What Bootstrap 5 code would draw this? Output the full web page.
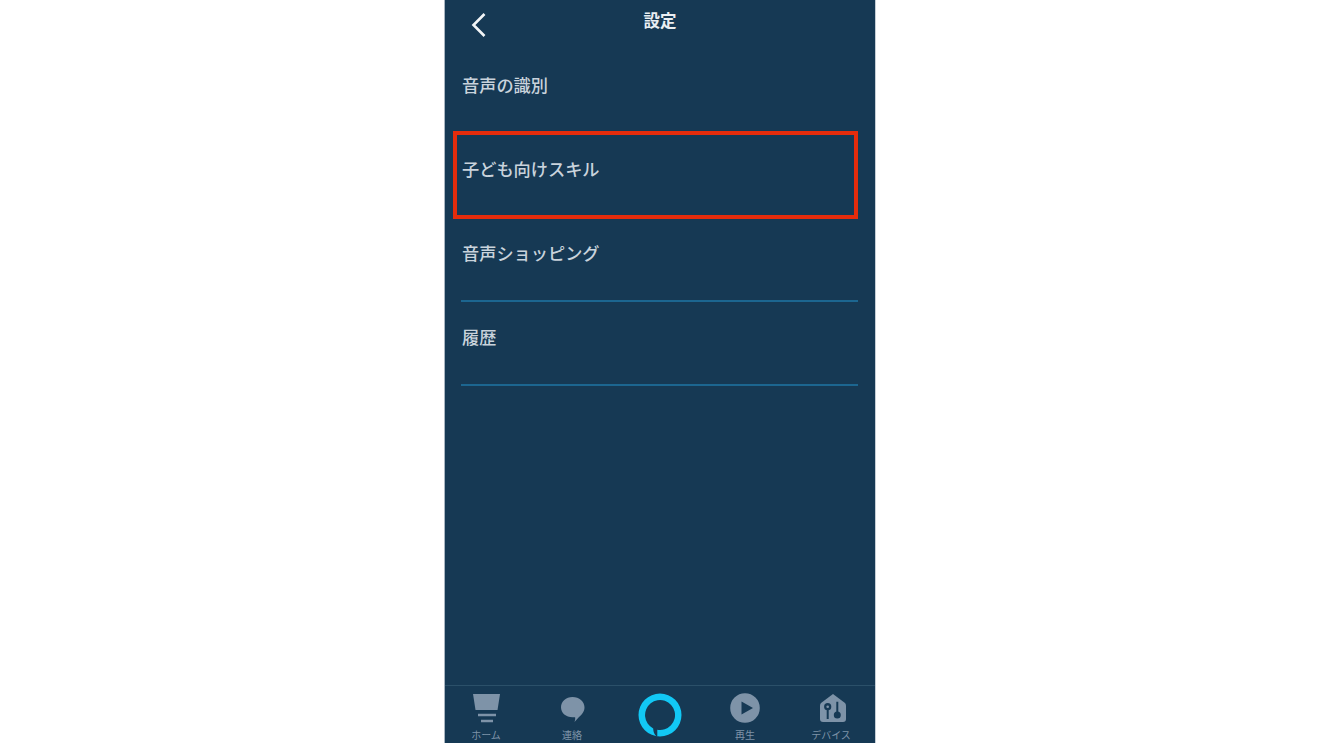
<!DOCTYPE html>
<html lang="ja">
<head>
<meta charset="utf-8">
<title>設定</title>
<link href="https://cdn.jsdelivr.net/npm/bootstrap@5.3.0/dist/css/bootstrap.min.css" rel="stylesheet">
<style>
html,body{height:100%;background:#fff;overflow:hidden}
body{font-family:"Noto Sans CJK JP","Liberation Sans",sans-serif}
.phone-screen{width:430px;height:743px;margin-left:445px;background:#163954;color:#c9d3dc;box-shadow:-1px 0 0 #a9b6c2,1px 0 0 #c5ced6}
.top-head{height:50px}
.back-btn{left:25px;top:12px;width:18px;height:26px}
.head-title{font-size:16.5px;font-weight:700;color:#e9eef2;line-height:20px;padding-top:10px}
.menu-row{height:84px;padding:25px 0 0 17px;font-size:17.2px;font-weight:500;line-height:20px}
.row-lined{border-bottom:2px solid #1c6690;margin-left:16px;padding-left:1px;margin-right:17px}
.red-frame{left:8px;top:-3px;width:405px;height:88px;border:4px solid #e52c0c;pointer-events:none}
.tab-bar{height:58px;border-top:1px solid #2b5069;display:grid;grid-template-columns:82px 90px 86px 84px 88px}
.tab-cell{height:57px}
.tab-art{height:40px}
.tab-name{font-size:10px;line-height:12px;margin-top:3px;color:#7e93a8;white-space:nowrap}
</style>
</head>
<body>
<main class="phone-screen d-flex flex-column">
  <header class="top-head position-relative text-center">
    <svg class="back-btn position-absolute" viewBox="0 0 18 26" aria-hidden="true"><path d="M14.500 2 3.500 13l11 11" fill="none" stroke="#f2f5f7" stroke-width="2.600"/></svg>
    <div class="head-title">設定</div>
  </header>
  <section class="flex-grow-1">
    <div class="menu-row">音声の識別</div>
    <div class="menu-row position-relative">子ども向けスキル<div class="red-frame position-absolute"></div></div>
    <div class="row-lined menu-row">音声ショッピング</div>
    <div class="row-lined menu-row">履歴</div>
  </section>
  <nav class="tab-bar">
    <div class="tab-cell d-flex flex-column align-items-center">
      <svg class="tab-art" width="30" height="40" viewBox="0 0 30 40" aria-hidden="true"><path d="M2 8h27l-2.500 16h-22z" fill="#7e93a8"/><path d="M7 27.700h18v2.600H7zM10 33.700h12v2.600H10z" fill="#7e93a8"/></svg>
      <div class="tab-name">ホーム</div>
    </div>
    <div class="tab-cell d-flex flex-column align-items-center">
      <svg class="tab-art" width="30" height="40" viewBox="0 0 30 40" aria-hidden="true"><path d="M15.500 11c6.800 0 12 4.300 12 10.300 0 4.700-3 7.700-5.500 9.700-1.500 1.500-3 3.500-4.500 5 .6-1.700.9-3.300.6-4.700-.4 0-1 0-2.600 0C9 31.300 4 27 4 21.300 4 15.300 9 11 15.500 11z" fill="#7e93a8"/></svg>
      <div class="tab-name">連絡</div>
    </div>
    <div class="tab-cell d-flex flex-column align-items-center">
      <svg width="46" height="52" viewBox="0 0 46 52" aria-hidden="true"><path fill-rule="evenodd" d="M23 7.500a21.500 21.500 0 1 1 0 43 21.500 21.500 0 1 1 0-43zM20.300 50.500V43.800A15 15 0 1 0 16.200 42.400C16.400 45.500 17 48.800 20.300 50.500z" fill="#12c8f5"/></svg>
    </div>
    <div class="tab-cell d-flex flex-column align-items-center">
      <svg class="tab-art" width="30" height="40" viewBox="0 0 30 40" aria-hidden="true"><path fill-rule="evenodd" d="M15 7.200a14.800 14.800 0 1 1 0 29.600 14.800 14.800 0 0 1 0-29.600zM11.500 15.500v13L23 22z" fill="#7e93a8"/></svg>
      <div class="tab-name">再生</div>
    </div>
    <div class="tab-cell d-flex flex-column align-items-center">
      <svg class="tab-art" width="30" height="40" viewBox="0 0 30 40" aria-hidden="true"><path d="M17 8 29 17q1 1 1 3V33q0 3-3 3H7q-3 0-3-3V20q0-2 1-3z" fill="#7e93a8"/><circle cx="11.700" cy="20.700" r="3.600" fill="#163954"/><circle cx="11.700" cy="20.700" r="1.300" fill="#7e93a8"/><path d="M10.700 24h2v9h-2zM20.300 15.700h2V26h-2z" fill="#163954"/><circle cx="21.300" cy="29" r="3.500" fill="#163954"/></svg>
      <div class="tab-name">デバイス</div>
    </div>
  </nav>
</main>
<script src="https://cdn.jsdelivr.net/npm/bootstrap@5.3.0/dist/js/bootstrap.bundle.min.js"></script>
</body>
</html>
